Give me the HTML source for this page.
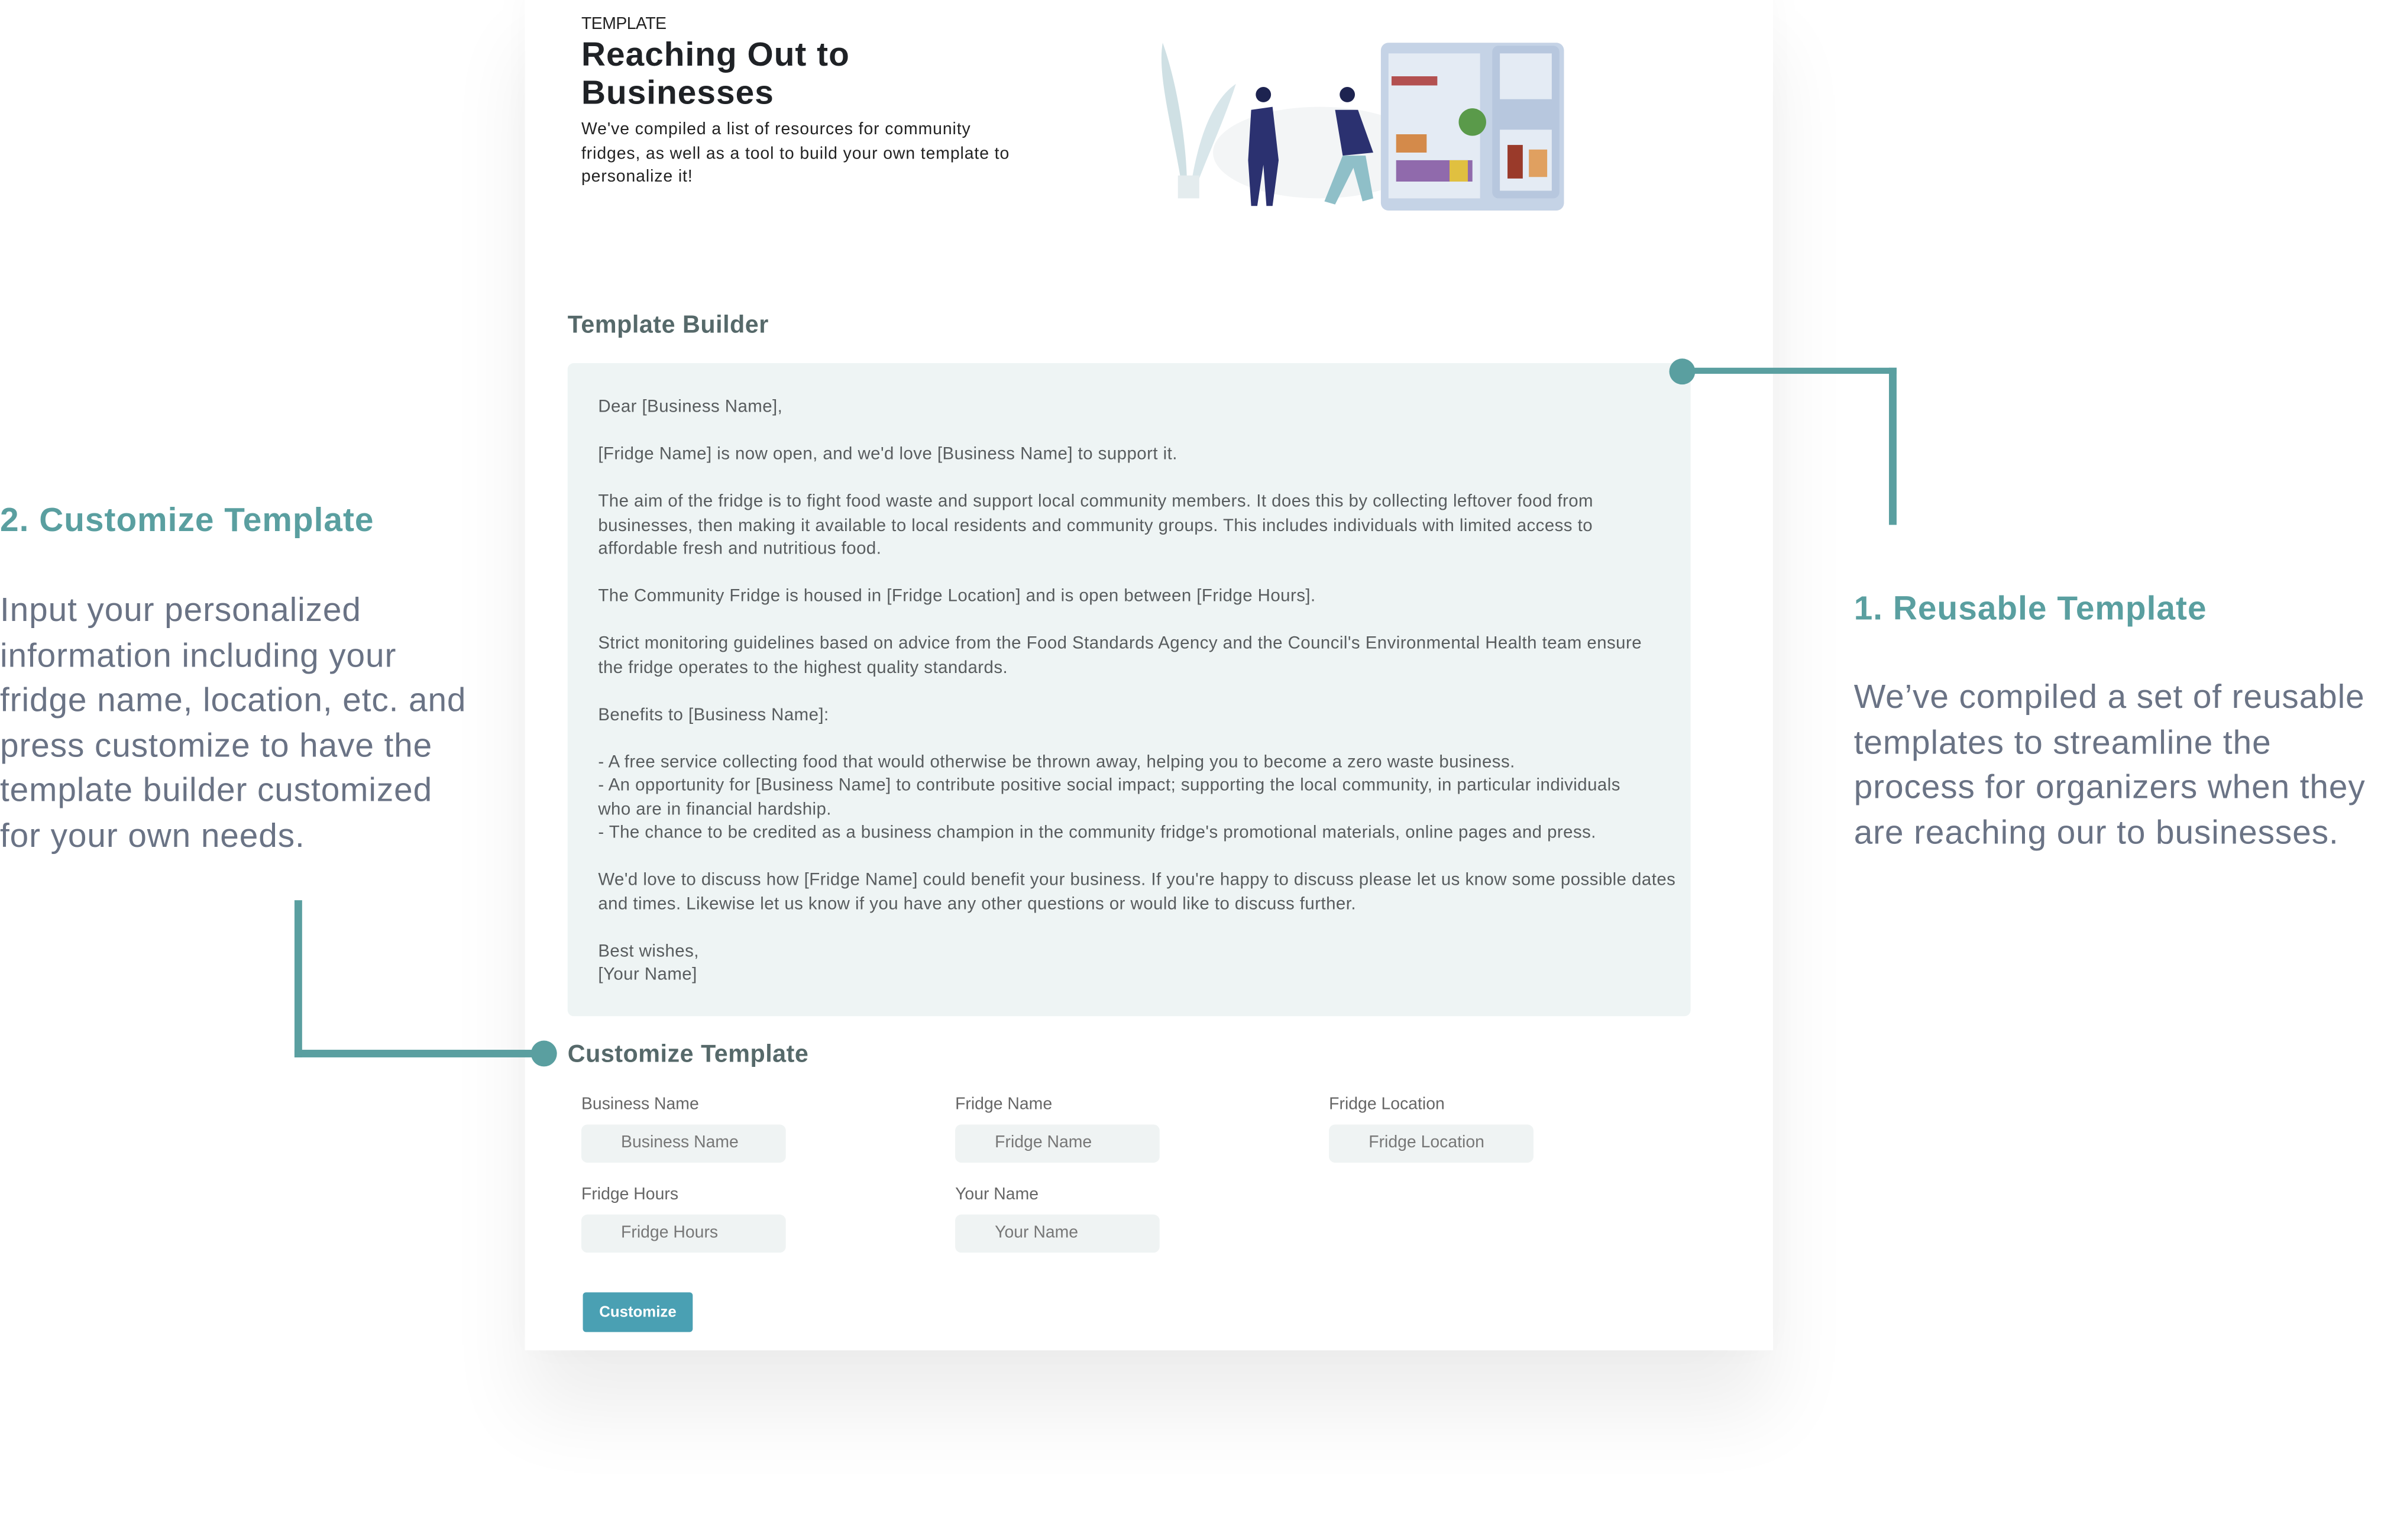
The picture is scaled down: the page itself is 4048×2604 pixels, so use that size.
<!DOCTYPE html>
<html><head><meta charset="utf-8"><style>
html,body{margin:0;padding:0;background:#fff;overflow:hidden}
body{width:4048px;height:2604px;position:relative}
#w{position:absolute;left:0;top:0;width:1569px;height:1010px;transform:scale(2.58);transform-origin:0 0;font-family:"Liberation Sans",sans-serif}
.a{position:absolute;white-space:nowrap}
#card{position:absolute;left:344px;top:-10px;width:818px;height:895px;background:#fff;box-shadow:0 40px 60px rgba(0,0,0,0.07),0 0 25px rgba(0,0,0,0.03)}
.t{color:#5a9fa0;font-weight:bold;font-size:22px;letter-spacing:0.4px}
.p{color:#6a7385;font-size:22px;line-height:29.5px;letter-spacing:0.35px}
.lb{font-size:11px;color:#666;}
.in{position:absolute;width:134px;height:25px;background:#eff3f3;border-radius:4px;font-size:11px;color:#777;line-height:25px;box-sizing:border-box;padding-left:26px}
.h{font-size:16px;font-weight:bold;color:#56696a;letter-spacing:0.2px}
</style></head><body><div id="w">
<div id="card"></div>
<div class="a" style="left:381px;top:10px;font-size:11px;color:#222;letter-spacing:-0.2px">TEMPLATE</div>
<div class="a" style="left:381px;top:23px;font-size:22px;font-weight:bold;color:#1f2226;line-height:25px;letter-spacing:0.4px">Reaching Out to<br>Businesses</div>
<div class="a" style="left:381px;top:78px;font-size:11px;color:#222;line-height:15.5px;letter-spacing:0.35px">We've compiled a list of resources for community<br>fridges, as well as a tool to build your own template to<br>personalize it!</div>
<svg class="a" style="left:750px;top:10px" width="290" height="135" viewBox="0 0 290 135">
<ellipse cx="115" cy="90" rx="70" ry="30" fill="#f3f5f6"/>
<path d="M25 115 C20 80 8 40 12 18 C20 40 28 80 28 115Z" fill="#cfe0e4"/>
<path d="M30 115 C35 80 45 55 60 45 C52 70 40 95 33 115Z" fill="#d8e6ea"/>
<rect x="22" y="105" width="14" height="15" fill="#e4ecee"/>
<circle cx="78" cy="52" r="5" fill="#1d2350"/><path d="M70 62 L84 60 L88 95 L84 125 L80 125 L78 98 L74 125 L70 125 L68 95Z" fill="#2b3170"/>
<circle cx="133" cy="52" r="5" fill="#1d2350"/><path d="M125 62 L140 62 L150 90 L130 92Z" fill="#2b3170"/><path d="M130 92 L145 92 L150 120 L143 122 L137 100 L125 124 L118 122Z" fill="#8fbfc8"/>
<rect x="155" y="18" width="120" height="110" rx="5" fill="#c5d3e6"/>
<rect x="160" y="25" width="60" height="95" fill="#e4ebf4"/>
<rect x="162" y="40" width="30" height="6" fill="#b35050"/><circle cx="215" cy="70" r="9" fill="#5a9a4a"/><rect x="165" y="78" width="20" height="12" fill="#d48a4a"/><rect x="165" y="95" width="50" height="14" fill="#7a4a9a" opacity=".8"/><rect x="200" y="95" width="12" height="14" fill="#e0c040"/>
<rect x="228" y="20" width="44" height="100" rx="4" fill="#b7c7de"/><rect x="233" y="25" width="34" height="30" fill="#e4ebf4"/><rect x="233" y="75" width="34" height="40" fill="#e4ebf4"/><rect x="238" y="85" width="10" height="22" fill="#9a3a2a"/><rect x="252" y="88" width="12" height="18" fill="#e0a060"/>
</svg>
<div class="a h" style="left:372px;top:205px">Template Builder</div>
<div class="a" style="left:372px;top:238px;width:736px;height:428px;background:#eef4f4;border-radius:4px"></div>
<div class="a" style="left:392px;top:260px;font-size:11.4px;line-height:15.5px;color:#585c5e;letter-spacing:0.18px">Dear [Business Name],<br><br>[Fridge Name] is now open, and we'd love [Business Name] to support it.<br><br>The aim of the fridge is to fight food waste and support local community members. It does this by collecting leftover food from<br>businesses, then making it available to local residents and community groups. This includes individuals with limited access to<br>affordable fresh and nutritious food.<br><br>The Community Fridge is housed in [Fridge Location] and is open between [Fridge Hours].<br><br>Strict monitoring guidelines based on advice from the Food Standards Agency and the Council's Environmental Health team ensure<br>the fridge operates to the highest quality standards.<br><br>Benefits to [Business Name]:<br><br>- A free service collecting food that would otherwise be thrown away, helping you to become a zero waste business.<br>- An opportunity for [Business Name] to contribute positive social impact; supporting the local community, in particular individuals<br>who are in financial hardship.<br>- The chance to be credited as a business champion in the community fridge's promotional materials, online pages and press.<br><br>We'd love to discuss how [Fridge Name] could benefit your business. If you're happy to discuss please let us know some possible dates<br>and times. Likewise let us know if you have any other questions or would like to discuss further.<br><br>Best wishes,<br>[Your Name]</div>
<div class="a h" style="left:372px;top:683px">Customize Template</div>
<div class="a lb" style="left:381px;top:718px">Business Name</div>
<div class="a lb" style="left:626px;top:718px">Fridge Name</div>
<div class="a lb" style="left:871px;top:718px">Fridge Location</div>
<div class="in" style="left:381px;top:737px">Business Name</div>
<div class="in" style="left:626px;top:737px">Fridge Name</div>
<div class="in" style="left:871px;top:737px">Fridge Location</div>
<div class="a lb" style="left:381px;top:777px">Fridge Hours</div>
<div class="a lb" style="left:626px;top:777px">Your Name</div>
<div class="in" style="left:381px;top:796px">Fridge Hours</div>
<div class="in" style="left:626px;top:796px">Your Name</div>
<div class="a" style="left:382px;top:847px;width:72px;height:26px;background:#4aa0b3;border-radius:2px;color:#fff;font-size:10px;font-weight:bold;line-height:27px;text-align:center">Customize</div>
<div class="a" style="left:1102px;top:241px;width:141px;height:4px;background:#5a9fa0"></div>
<div class="a" style="left:1238px;top:241px;width:5px;height:103px;background:#5a9fa0"></div>
<div class="a" style="left:1094px;top:235px;width:17px;height:17px;border-radius:50%;background:#5a9fa0"></div>
<div class="a" style="left:193px;top:590px;width:5px;height:103px;background:#5a9fa0"></div>
<div class="a" style="left:193px;top:688px;width:162px;height:5px;background:#5a9fa0"></div>
<div class="a" style="left:348px;top:682px;width:17px;height:17px;border-radius:50%;background:#5a9fa0"></div>
<div class="a t" style="left:0;top:328px">2. Customize Template</div>
<div class="a p" style="left:0;top:385px">Input your personalized<br>information including your<br>fridge name, location, etc. and<br>press customize to have the<br>template builder customized<br>for your own needs.</div>
<div class="a t" style="left:1215px;top:386px">1. Reusable Template</div>
<div class="a p" style="left:1215px;top:442px">We’ve compiled a set of reusable<br>templates to streamline the<br>process for organizers when they<br>are reaching our to businesses.</div>
</div></body></html>
